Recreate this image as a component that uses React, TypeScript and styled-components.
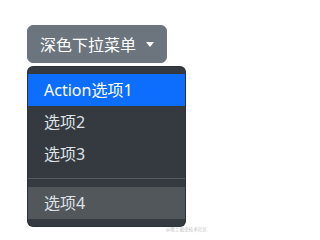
import React from "react";
import styled, { createGlobalStyle } from "styled-components";

const Global = createGlobalStyle`
  html, body { margin: 0; padding: 0; background: #ffffff; }
  body {
    font-family: "Noto Sans", "Noto Sans CJK SC", sans-serif;
    -webkit-font-smoothing: antialiased;
  }
`;

const Page = styled.div`
  position: relative;
  width: 214px;
  height: 238px;
  box-sizing: border-box;
  padding: 25px 0 0 27px;
  overflow: hidden;
`;

const Dropdown = styled.div`
  display: inline-flex;
  flex-direction: column;
  align-items: flex-start;
`;

const ToggleButton = styled.button`
  display: inline-flex;
  align-items: center;
  gap: 10px;
  box-sizing: border-box;
  height: 38px;
  padding: 0 12px 0 12px;
  border: 1px solid #6c757d;
  border-radius: 6px;
  background: #6c757d;
  color: #ffffff;
  font-family: "Noto Sans CJK SC", sans-serif;
  font-size: 16px;
  line-height: 24px;
  cursor: pointer;
`;

const Caret = styled.span`
  display: inline-block;
  width: 0;
  height: 0;
  border-top: 5px solid #ffffff;
  border-left: 4.5px solid transparent;
  border-right: 4.5px solid transparent;
  margin-top: 1px;
`;

const Menu = styled.ul`
  list-style: none;
  margin: 3px 0 0 0;
  padding: 7px 0;
  box-sizing: border-box;
  width: 159px;
  background: #343a40;
  border: 1px solid rgba(0, 0, 0, 0.15);
  border-radius: 6px;
  font-family: "Noto Sans", "Noto Sans CJK SC", sans-serif;
`;

const Item = styled.li<{ $state?: "active" | "hover" }>`
  display: flex;
  align-items: center;
  height: 32px;
  padding: 0 16px;
  font-size: 16px;
  line-height: 24px;
  color: ${(p) => (p.$state === "active" ? "#ffffff" : "#dee2e6")};
  background: ${(p) =>
    p.$state === "active"
      ? "#0d6efd"
      : p.$state === "hover"
      ? "rgba(255, 255, 255, 0.15)"
      : "transparent"};
`;

const Divider = styled.li`
  height: 0;
  margin: 8px 0;
  border-top: 1px solid #565b60;
`;

const Watermark = styled.span`
  position: absolute;
  right: 7px;
  bottom: 6px;
  font-family: "Noto Sans CJK SC", sans-serif;
  font-size: 4.6px;
  line-height: 6px;
  color: #c4c4c4;
  letter-spacing: 0;
`;

export default function App() {
  return (
    <Page>
      <Global />
      <Dropdown>
        <ToggleButton type="button">
          深色下拉菜单
          <Caret />
        </ToggleButton>
        <Menu>
          <Item $state="active">Action选项1</Item>
          <Item>选项2</Item>
          <Item>选项3</Item>
          <Divider />
          <Item $state="hover">选项4</Item>
        </Menu>
      </Dropdown>
      <Watermark>@稀土掘金技术社区</Watermark>
    </Page>
  );
}
